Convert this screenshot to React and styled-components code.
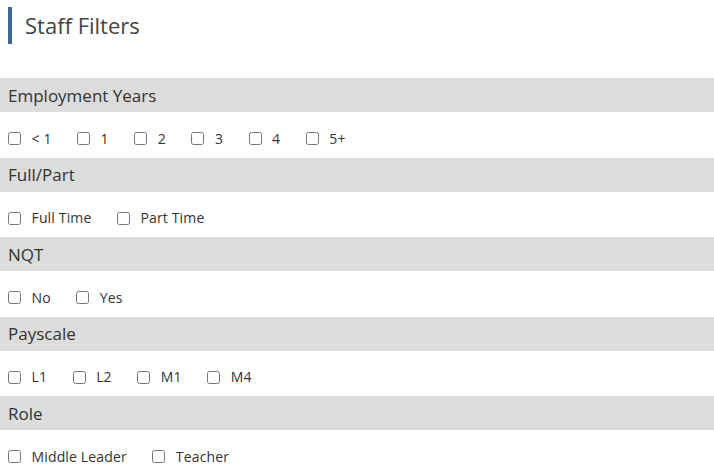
import styled, { createGlobalStyle } from "styled-components";

const filters = [
  { title: "Employment Years", options: ["< 1", "1", "2", "3", "4", "5+"] },
  { title: "Full/Part", options: ["Full Time", "Part Time"] },
  { title: "NQT", options: ["No", "Yes"] },
  { title: "Payscale", options: ["L1", "L2", "M1", "M4"] },
  { title: "Role", options: ["Middle Leader", "Teacher"] },
];

const App = () => {
  return (
    <>
      <Global />
      <Page_div>
        <Title_h>Staff Filters</Title_h>

        <Sections_div>
          {filters.map((f) => (
            <section key={f.title}>
              <Header_div>{f.title}</Header_div>
              <Options_div>
                {f.options.map((o) => (
                  <Option_label key={o}>
                    <Check_input type="checkbox" />
                    <span>{o}</span>
                  </Option_label>
                ))}
              </Options_div>
            </section>
          ))}
        </Sections_div>
      </Page_div>
    </>
  );
};

const Global = createGlobalStyle`
  body {
    margin: 0;
    background: #fff;
    font-family: "Open Sans", "Liberation Sans", sans-serif;
    color: #333;
  }
`;

const Page_div = styled.div`
  width: 714px;
  padding-top: 7px;
`;

const Title_h = styled.h2`
  margin: 0 0 0 8px;
  height: 37px;
  padding-left: 13px;
  border-left: 4px solid #3e6690;
  font-size: 22px;
  font-weight: 400;
  line-height: 37px;
  color: #444;
`;

const Sections_div = styled.div`
  margin-top: 34px;
`;

const Header_div = styled.div`
  height: 34px;
  padding-left: 8px;
  display: flex;
  align-items: center;
  background-color: #dcdcdc;
  font-size: 17px;
  color: #333;
`;

const Options_div = styled.div`
  height: 45.5px;
  padding: 13px 0 0 8px;
  box-sizing: border-box;
  display: flex;
  align-items: center;
  align-content: flex-start;
  flex-wrap: wrap;
`;

const Option_label = styled.label`
  height: 26px;
  display: flex;
  align-items: center;
  margin-right: 25.5px;
  font-size: 14px;
  letter-spacing: 0.15px;
  color: #333;
`;

const Check_input = styled.input`
  width: 13px;
  height: 13px;
  margin: 1px 10.5px 0 0;
`;

export default App;
